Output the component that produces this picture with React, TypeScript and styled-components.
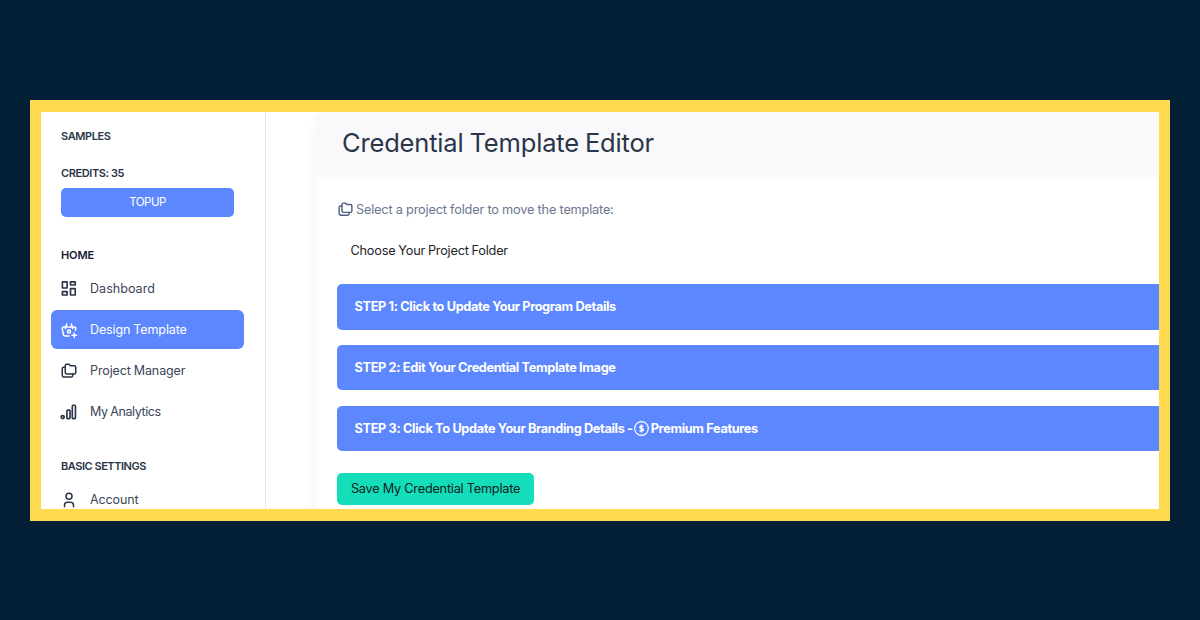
import React from "react";
import styled, { createGlobalStyle } from "styled-components";
import { TbBasketPlus, TbFolders, TbUser } from "react-icons/tb";

const GlobalStyle = createGlobalStyle`
  *, *::before, *::after { box-sizing: border-box; }
  body { margin: 0; background: #031f36; }
`;

const Page = styled.div`
  width: 1200px;
  height: 620px;
  padding: 100px 30px 0;
  overflow: hidden;
  background: #031f36;
  font-family: Inter, "Liberation Sans", sans-serif;
  color: #2a3547;
`;

const Frame = styled.div`
  display: flex;
  height: 420.5px;
  padding: 11.5px 11.5px 11.5px 11px;
  background: #ffd94f;
`;

const Screen = styled.div`
  display: flex;
  flex: 1;
  min-width: 0;
  overflow: hidden;
  background: #fff;
`;

const Sidebar = styled.aside`
  flex: 0 0 225px;
  border-right: 1px solid #e5eaef;
  padding: 14.5px 20px 0 10px;
`;

const Caption = styled.div<{ $top?: number; $spacing?: number; $color?: string }>`
  height: 20px;
  margin-top: ${(p) => p.$top ?? 0}px;
  padding-left: 10px;
  font-size: 11px;
  font-weight: 600;
  line-height: 20px;
  letter-spacing: ${(p) => p.$spacing ?? 0}px;
  color: ${(p) => p.$color ?? "#2a3547"};
  white-space: nowrap;
`;

const TopupButton = styled.button`
  display: block;
  width: 173px;
  height: 29.5px;
  margin: 4.5px 0 0 10px;
  padding: 0;
  border: 0;
  border-radius: 5px;
  background: #5d87ff;
  color: #fff;
  font: 400 11.5px/29px Inter, sans-serif;
  letter-spacing: -0.5px;
`;

const NavItem = styled.a<{ $active?: boolean; $spacing?: number }>`
  display: flex;
  align-items: center;
  width: 193.4px;
  height: 39px;
  margin-bottom: 2.2px;
  padding-left: 9px;
  gap: 12px;
  border-radius: 6px;
  background: ${(p) => (p.$active ? "#5d87ff" : "transparent")};
  color: ${(p) => (p.$active ? "#fff" : "#2a3547")};
  font-size: 12.5px;
  letter-spacing: ${(p) => p.$spacing ?? -0.1}px;
  word-spacing: -0.5px;
  white-space: nowrap;

  svg { flex: none; }
  span {
    padding-bottom: 1px;
    color: ${(p) => (p.$active ? "#fff" : "#3b4557")};
  }
`;

const NavGroup = styled.nav<{ $top: number }>`
  margin-top: ${(p) => p.$top}px;
`;

const Main = styled.main`
  flex: 1;
  min-width: 0;
  padding-left: 50px;
`;

const Card = styled.section`
  height: 460px;
  width: 900px;
  border-radius: 7px 0 0 0;
  background: #fff;
  box-shadow: 0 9px 17.5px rgba(0, 0, 0, 0.05);
`;

const CardHeader = styled.header`
  height: 65.5px;
  padding-left: 26px;
  border-radius: 7px 0 0 0;
  background: #f9f9fc;
`;

const Title = styled.h1`
  margin: 0;
  font-size: 25.5px;
  font-weight: 400;
  line-height: 62px;
  letter-spacing: -0.17px;
  word-spacing: -1px;
  white-space: nowrap;
`;

const CardBody = styled.div`
  padding: 22px 0 0 21px;
`;

const FolderLabel = styled.div`
  display: flex;
  align-items: center;
  gap: 2px;
  height: 20px;
  font-size: 12.75px;
  letter-spacing: -0.2px;
  color: #6a7790;
  white-space: nowrap;

  svg { color: #4f5f7c; }
`;

const FolderSelect = styled.div`
  height: 20px;
  margin: 22px 0 23px;
  padding-left: 13.5px;
  font-size: 12.75px;
  line-height: 20px;
  letter-spacing: -0.24px;
  word-spacing: -0.4px;
  color: #1f2329;
  white-space: nowrap;
`;

const Step = styled.div`
  display: flex;
  align-items: center;
  height: 45.5px;
  margin-bottom: 15.4px;
  padding-left: 17.5px;
  border-radius: 5px;
  background: #5d87ff;
  color: #fff;
  font-size: 12.75px;
  font-weight: 700;
  letter-spacing: -0.36px;
  white-space: nowrap;

  svg { margin: 0 1.5px 0 1.5px; }
`;

const SaveButton = styled.button`
  display: block;
  width: 197px;
  height: 32px;
  margin-top: 22px;
  padding: 0;
  border: 0;
  border-radius: 5px;
  background: #13deb9;
  color: #10201f;
  font: 400 12.75px/32px Inter, sans-serif;
  letter-spacing: -0.25px;
  white-space: nowrap;
`;

const DashboardIcon = () => (
  <svg width="18" height="18" viewBox="0 0 24 24" fill="none" stroke="currentColor" strokeWidth="2.2" strokeLinejoin="round">
    <path d="M3.2 2.4h6.3v8.3H3.2zM3.2 15.4h6.3V20H3.2zM14 2.4h6.3v4.3H14zM14 11.4h6.3V20H14z" />
  </svg>
);

const BarsIcon = () => (
  <svg width="18" height="18" viewBox="0 0 24 24" fill="none" stroke="currentColor" strokeWidth="2.2">
    <circle cx="3.6" cy="18.8" r="2" />
    <rect x="9.2" y="9.5" width="4.2" height="11.3" rx="1.2" />
    <rect x="16.4" y="3" width="4.2" height="17.8" rx="1.2" />
  </svg>
);

const CoinIcon = () => (
  <svg width="15" height="15" viewBox="0 0 15 15" fill="none" stroke="currentColor">
    <circle cx="7.5" cy="7.5" r="6.8" strokeWidth="1.2" />
    <path d="M9.2 5.8C8.9 5.2 8.3 5 7.5 5c-1 0-1.7.5-1.7 1.200S6.500 7.400 7.500 7.500s1.800.5 1.800 1.300S8.500 10 7.500 10c-.9 0-1.500-.3-1.800-.9M7.500 3.500v8" strokeWidth="1.400" />
  </svg>
);

export default function App() {
  return (
    <Page>
      <GlobalStyle />
      <Frame>
        <Screen>
          <Sidebar>
            <Caption $spacing={-0.4}>SAMPLES</Caption>
            <Caption $top={17} $spacing={-0.4}>CREDITS: 35</Caption>
            <TopupButton>TOPUP</TopupButton>
            <Caption $top={28} $color="#111c2d" $spacing={-0.1}>HOME</Caption>
            <NavGroup $top={4}>
              <NavItem $spacing={0.05}><DashboardIcon /><span>Dashboard</span></NavItem>
              <NavItem $active><TbBasketPlus size={18} /><span>Design Template</span></NavItem>
              <NavItem><TbFolders size={18} /><span>Project Manager</span></NavItem>
              <NavItem $spacing={-0.4}><BarsIcon /><span>My Analytics</span></NavItem>
            </NavGroup>
            <Caption $top={24.3} $spacing={-0.46}>BASIC SETTINGS</Caption>
            <NavGroup $top={4.5}>
              <NavItem><TbUser size={18} /><span>Account</span></NavItem>
            </NavGroup>
          </Sidebar>
          <Main>
            <Card>
              <CardHeader><Title>Credential Template Editor</Title></CardHeader>
              <CardBody>
                <FolderLabel><TbFolders size={17} /><span>Select a project folder to move the template:</span></FolderLabel>
                <FolderSelect>Choose Your Project Folder</FolderSelect>
                <Step>STEP 1: Click to Update Your Program Details</Step>
                <Step>STEP 2: Edit Your Credential Template Image</Step>
                <Step>
                  <span>STEP 3: Click To Update Your Branding Details -</span>
                  <CoinIcon />
                  <span>Premium Features</span>
                </Step>
                <SaveButton>Save My Credential Template</SaveButton>
              </CardBody>
            </Card>
          </Main>
        </Screen>
      </Frame>
    </Page>
  );
}
